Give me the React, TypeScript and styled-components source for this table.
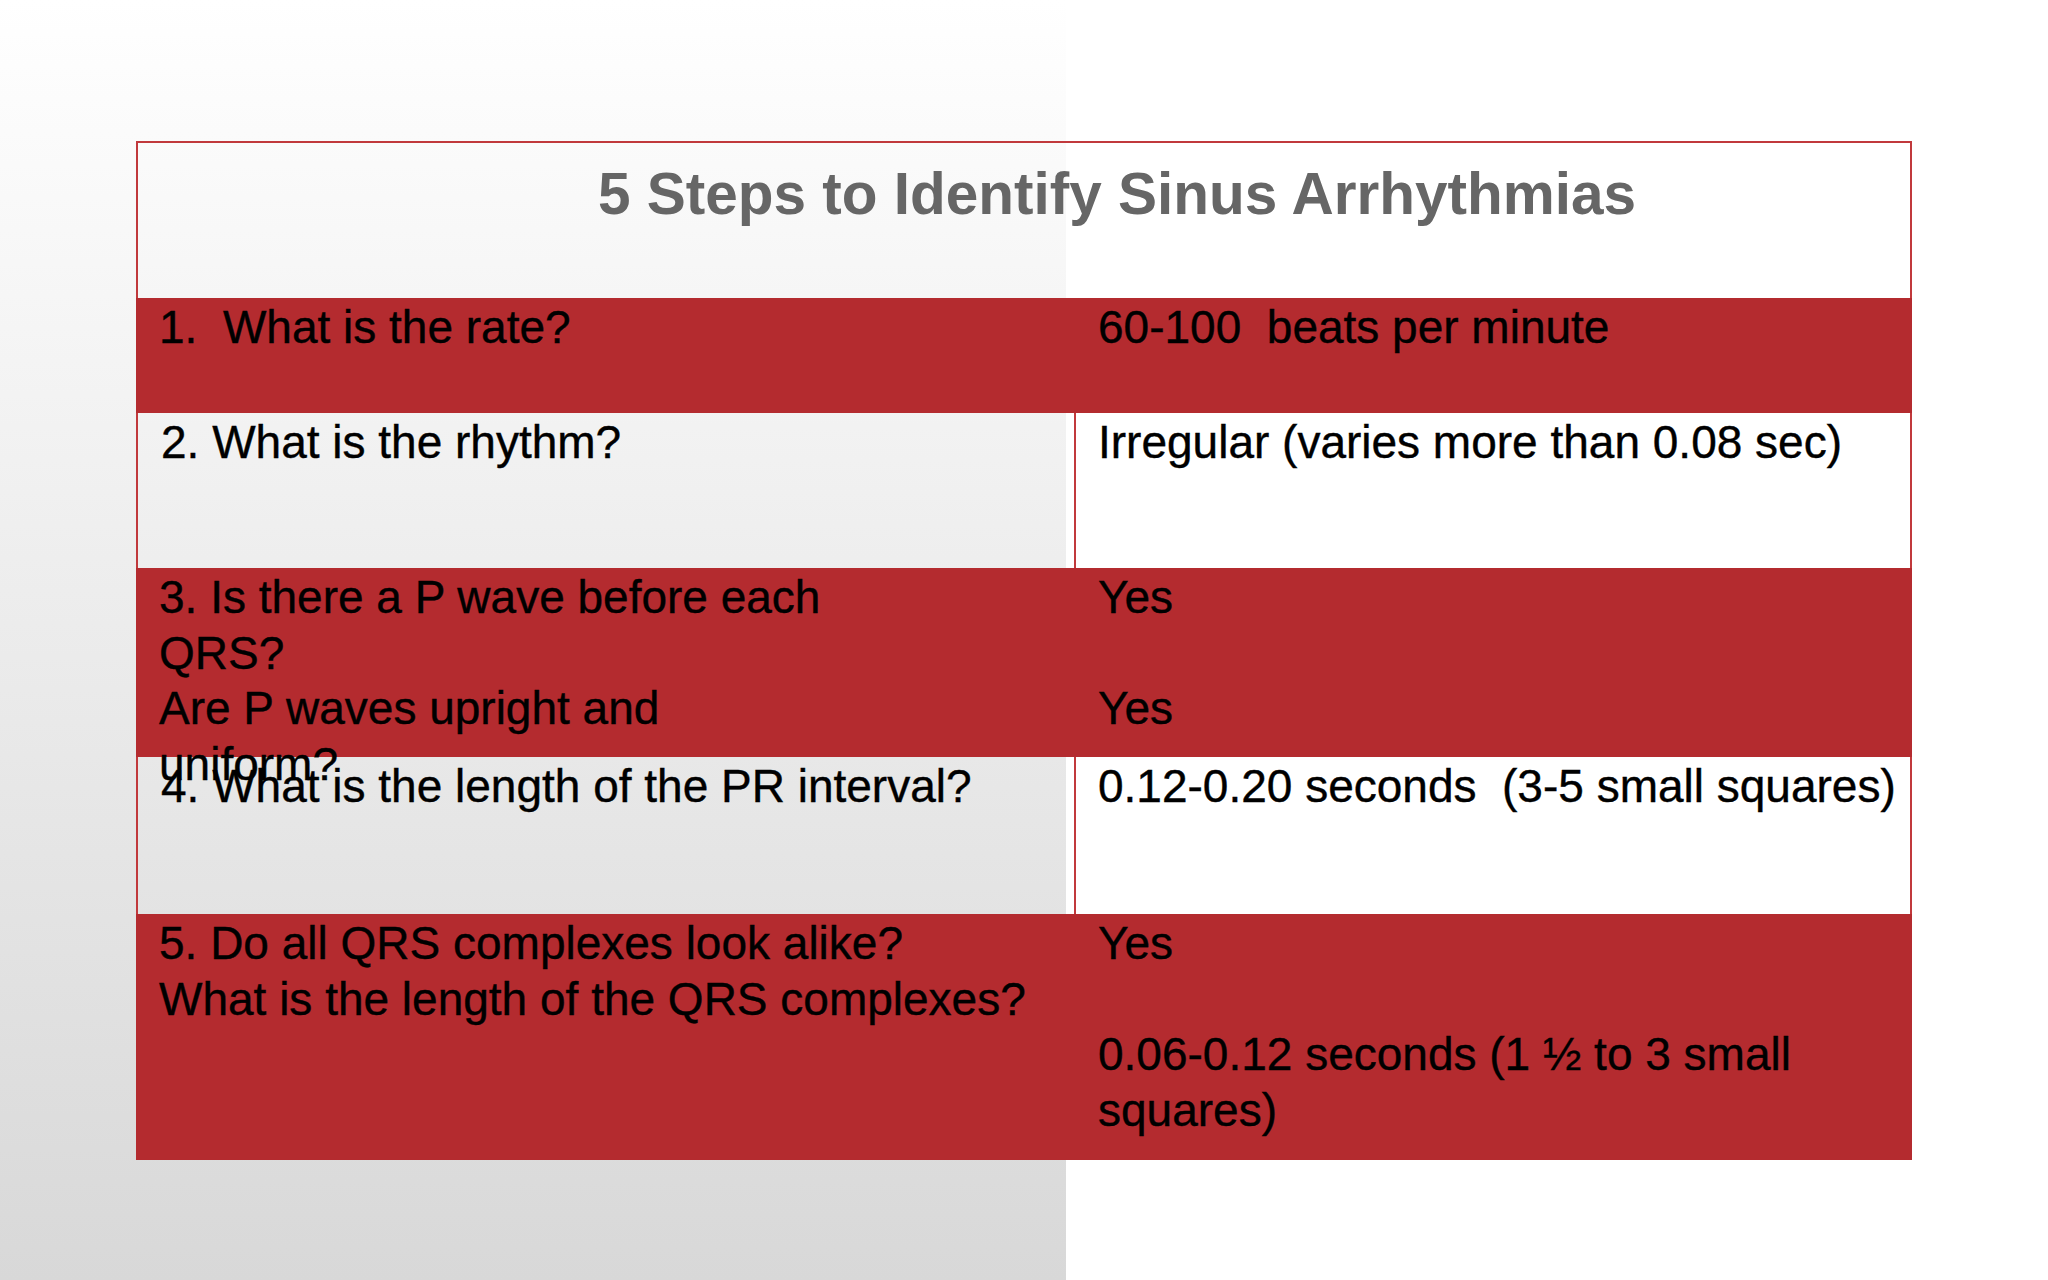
import React from 'react';
import styled, { createGlobalStyle } from 'styled-components';

const GlobalStyle = createGlobalStyle`
  html, body {
    margin: 0;
    padding: 0;
    background: #ffffff;
  }
`;

const RED = '#b42b2f';
const LINE = '#c1393c';

// Slide background: left half fades to grey, right half stays white
const Slide = styled.div`
  width: 2048px;
  height: 1280px;
  box-sizing: border-box;
  padding: 141px 0 0 136px;
  background: linear-gradient(to bottom, #ffffff 0%, #d8d8d8 100%) 0 0 / 1066px 100% no-repeat, #ffffff;
  overflow: hidden;
`;

const Table = styled.div`
  width: 1776px;
  display: flex;
  flex-direction: column;
  font-family: 'Liberation Sans', Arial, sans-serif;
`;

const TitleRow = styled.div`
  height: 157px;
  box-sizing: border-box;
  border: 2px solid ${LINE};
  border-bottom: none;
  padding: 17px 0 0 186px;
  text-align: center;
  font-size: 58.5px;
  font-weight: 700;
  line-height: 67px;
  color: #666666;
`;

const Row = styled.div<{ $red?: boolean; $height: number }>`
  display: grid;
  grid-template-columns: 938px 1fr;
  height: ${(p) => p.$height}px;
  background: ${(p) => (p.$red ? RED : 'transparent')};
`;

const Cell = styled.div<{ $red?: boolean; $side: 'left' | 'right' }>`
  box-sizing: border-box;
  padding: 2px 0 0 ${(p) => (p.$side === 'left' ? 23 : 24)}px;
  font-size: 46px;
  line-height: 55.5px;
  color: #000000;
  -webkit-text-stroke: 0.4px #000000;
  white-space: pre;
  background: ${(p) => (p.$red || p.$side === 'left' ? 'transparent' : '#ffffff')};
  border-left: ${(p) => (!p.$red && p.$side === 'left' ? `2px solid ${LINE}` : 'none')};
  border-right: ${(p) => (p.$red ? 'none' : `2px solid ${LINE}`)};
  ${(p) => (p.$side === 'left' && !p.$red ? 'margin-right: -2px; position: relative; z-index: 1;' : '')}
`;

type Step = {
  height: number;
  red?: boolean;
  question: React.ReactNode;
  answer: React.ReactNode;
};

const steps: Step[] = [
  {
    height: 115,
    red: true,
    question: '1.  What is the rate?',
    answer: '60-100  beats per minute',
  },
  {
    height: 155,
    question: '2. What is the rhythm?',
    answer: 'Irregular (varies more than 0.08 sec)',
  },
  {
    height: 189,
    red: true,
    question: (
      <>
        3. Is there a P wave before each
        <br />
        QRS?
        <br />
        Are P waves upright and
        <br />
        uniform?
      </>
    ),
    answer: (
      <>
        Yes
        <br />
        <br />
        Yes
      </>
    ),
  },
  {
    height: 157,
    question: '4. What is the length of the PR interval?',
    answer: '0.12-0.20 seconds  (3-5 small squares)',
  },
  {
    height: 246,
    red: true,
    question: (
      <>
        5. Do all QRS complexes look alike?
        <br />
        What is the length of the QRS complexes?
      </>
    ),
    answer: (
      <>
        Yes
        <br />
        <br />
        0.06-0.12 seconds (1 ½ to 3 small
        <br />
        squares)
      </>
    ),
  },
];

const App = () => (
  <>
    <GlobalStyle />
    <Slide>
      <Table>
        <TitleRow>5 Steps to Identify Sinus Arrhythmias</TitleRow>
        {steps.map((s, i) => (
          <Row key={i} $red={s.red} $height={s.height}>
            <Cell $red={s.red} $side="left">{s.question}</Cell>
            <Cell $red={s.red} $side="right">{s.answer}</Cell>
          </Row>
        ))}
      </Table>
    </Slide>
  </>
);

export default App;
